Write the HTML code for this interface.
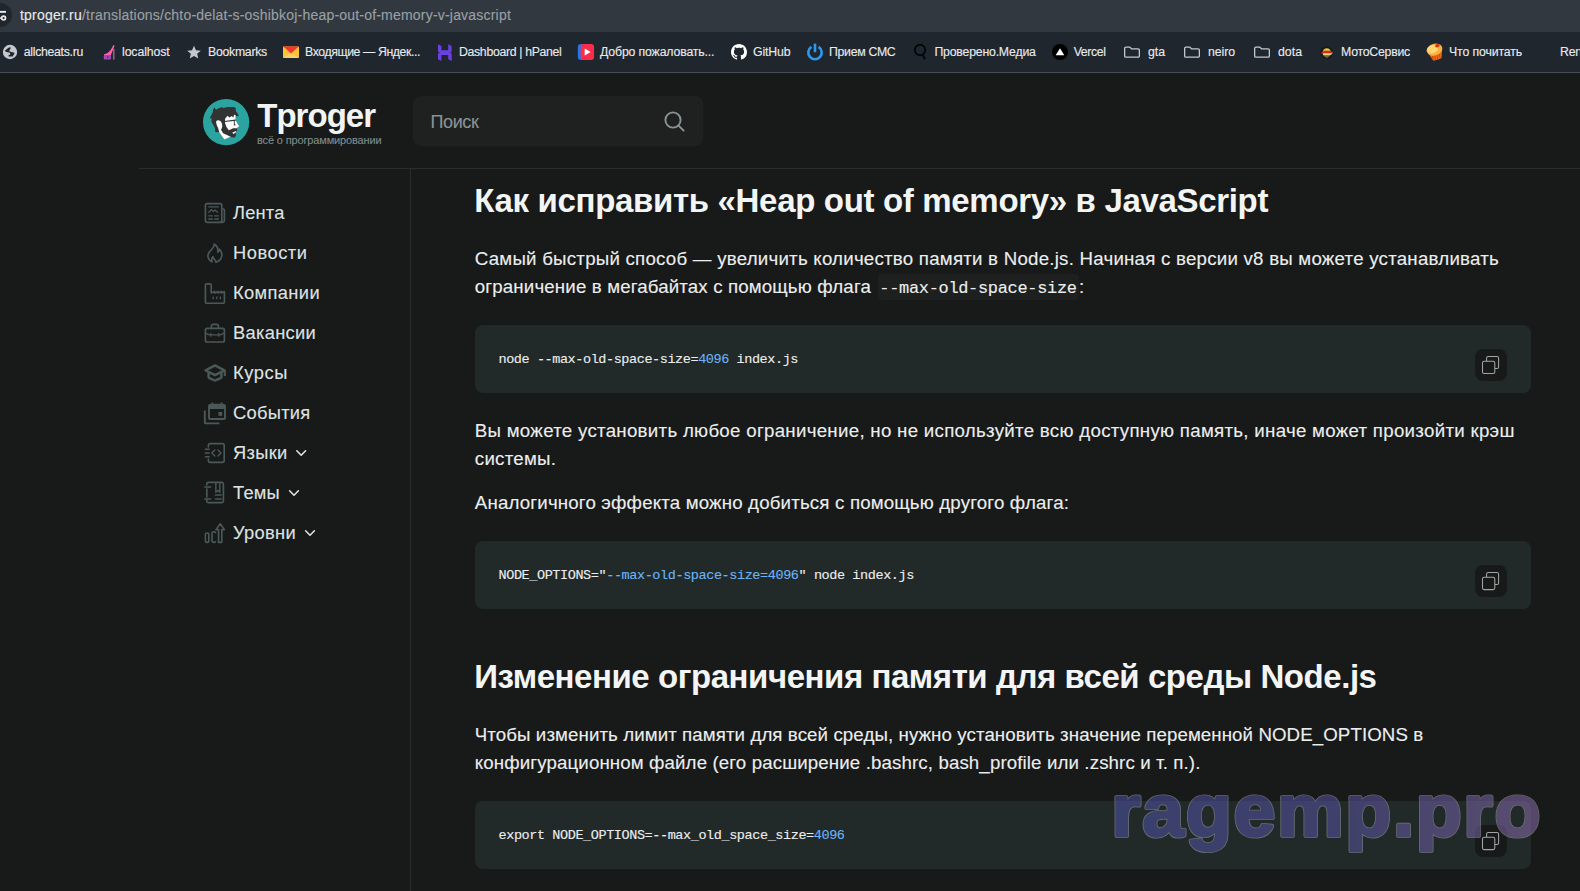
<!DOCTYPE html>
<html lang="ru"><head><meta charset="utf-8"><title>Что делать с ошибкой Heap out of memory в JavaScript</title>
<style>
html,body{margin:0;padding:0}
body{width:1580px;height:891px;overflow:hidden;background:#181a1a;position:relative;font-family:"Liberation Sans",sans-serif}
.t{position:absolute;white-space:nowrap;margin:0;-webkit-text-stroke:0.12px currentColor}
.a{position:absolute}
#addr{left:0;top:0;width:1580px;height:32px;background:#32383f}
#bmbar{left:0;top:32px;width:1580px;height:40px;background:#1f262d}
#bmline{left:0;top:72px;width:1580px;height:1px;background:#474c52}
#hline{left:139px;top:168px;width:1441px;height:1px;background:#2a2d2d}
#vline{left:410px;top:168px;width:1px;height:723px;background:#2a2d2d}
#searchbox{left:413px;top:96px;width:290px;height:50px;background:#1f2121;border-radius:8px}
.code{left:475px;width:1056px;height:68px;background:#222929;border-radius:8px}
.copy{left:1475px;width:32px;height:32px;background:#181a1a;border-radius:8px}
.inl{left:877.5px;top:274px;width:201.7px;height:25.7px;background:#1e2020;border-radius:4px}
.m{font-family:"Liberation Mono",monospace}

</style></head><body>
<div class="a" id="addr"></div>
<div class="a" id="bmbar"></div>
<div class="a" id="bmline"></div>
<!-- site info chip -->
<svg class="a" style="left:0;top:0" width="16" height="32" viewBox="0 0 16 32">
  <circle cx="0" cy="15" r="12" fill="#20262c"/>
  <rect x="-1" y="10.9" width="7" height="1.9" fill="#e8eaed"/>
  <rect x="-1" y="17.2" width="1.8" height="1.8" fill="#e8eaed"/>
  <circle cx="3.6" cy="18.1" r="1.9" fill="none" stroke="#e8eaed" stroke-width="1.7"/>
</svg>
<!-- bookmark favicons -->
<svg class="a" style="left:0;top:40px" width="1580" height="24" viewBox="0 40 1580 24">
  <!-- globe -->
  <circle cx="10" cy="52" r="7.2" fill="#c4c7cc"/>
  <path d="M5 50.5L8.8 47.4h2.3L9.9 49.4 9.2 51.3l2.3.7 3 .8-.4 1.5-1.5 2.3H8.8l-.6-.75 2.1-1.55-.4-1.5-4.2-1.15z" fill="#20262c"/>
  <!-- heel -->
  <path d="M104 54.2c3.2-.2 6.4-2.6 9.4-9.2l1.2.6c-1.2 4-3 7.600-3.900 9.800L104 55.800z" fill="#ff5fb0"/>
  <rect x="103.800" y="55" width="7.200" height="4.600" rx="0.800" fill="#a04bb5"/>
  <rect x="107" y="56.300" width="1.600" height="1.600" fill="#5d2b73"/>
  <rect x="112.900" y="49" width="1.700" height="10.600" fill="#8c5c82"/>
  <!-- star -->
  <path d="M194 45.700l1.950 4.500 4.850.450-3.650 3.200 1.100 4.750L194 56.100l-4.250 2.500 1.100-4.750-3.650-3.200 4.850-.450z" fill="#c4c7cc"/>
  <!-- yandex mail -->
  <rect x="283" y="46.400" width="16" height="11.500" rx="0.800" fill="#fcc23a"/>
  <path d="M283 57.900l8-5.500 8 5.500z" fill="#fdd264"/>
  <path d="M283.300 46.400h15.400L291 53.600z" fill="#f9352b"/>
  <!-- hpanel -->
  <path d="M438 44.300l3.400 1.700v4.200h6.800v-5.900l3.400 1.700v5.800h.1l-3.500 1.700h-6.800l-3.400-1.700zM438 59.300l0-5.800 3.400-1.700h6.800l3.500 1.700v7.500l-3.500-1.700v-4.200h-6.800v5.900z" fill="#6a40e0"/>
  <!-- red play -->
  <rect x="577.800" y="44" width="13" height="16" rx="3" fill="#1f78f0"/>
  <rect x="580.600" y="44" width="13.500" height="16" rx="3" fill="#f92d4b"/>
  <path d="M584.700 48.600l6 3.400-6 3.400z" fill="#fff"/>
  <!-- github -->
  <path transform="translate(731 44)" d="M8 0C3.58 0 0 3.58 0 8c0 3.54 2.29 6.53 5.47 7.59.4.07.55-.17.55-.38 0-.19-.01-.82-.01-1.49-2.01.37-2.53-.49-2.69-.94-.09-.23-.48-.94-.82-1.13-.28-.15-.68-.52-.01-.53.63-.01 1.08.58 1.23.82.72 1.21 1.87.87 2.33.66.07-.52.28-.87.51-1.07-1.78-.2-3.64-.89-3.64-3.95 0-.87.31-1.59.82-2.15-.08-.2-.36-1.02.08-2.12 0 0 .67-.21 2.2.82.64-.18 1.32-.27 2-.27s1.36.09 2 .27c1.53-1.04 2.2-.82 2.2-.82.44 1.1.16 1.92.08 2.12.51.56.82 1.27.82 2.15 0 3.07-1.87 3.75-3.65 3.95.29.25.54.73.54 1.48 0 1.07-.01 1.93-.01 2.2 0 .21.15.46.55.38A8.01 8.01 0 0016 8c0-4.42-3.58-8-8-8z" fill="#fff"/>
  <!-- power -->
  <path d="M811.400 46.900a6.700 6.700 0 1 0 7.200 0" fill="none" stroke="#2d98ec" stroke-width="2.600" stroke-linecap="butt"/>
  <rect x="813.700" y="43.600" width="2.600" height="8.600" fill="#2d98ec"/>
  <!-- Q magnifier (black) -->
  <circle cx="920" cy="50" r="5.200" fill="none" stroke="#050607" stroke-width="1.900"/>
  <path d="M922.600 54.600l2.400 4.600" stroke="#050607" stroke-width="2" fill="none"/>
  <path d="M920.300 46.700a3.300 3.300 0 0 1 2.700 2" stroke="#2a3036" stroke-width="0.900" fill="none"/>
  <!-- vercel -->
  <circle cx="1060" cy="52" r="8" fill="#000"/>
  <path d="M1060 48.200l4.300 7h-8.600z" fill="#fff"/>
  <!-- folders -->
  <g fill="none" stroke="#c4c7cc" stroke-width="1.300" stroke-linejoin="round">
    <path d="M1124.650 48.300a1.200 1.200 0 0 1 1.200-1.200h4l1.600 1.700h6.700a1.200 1.200 0 0 1 1.200 1.200v6a1.200 1.200 0 0 1-1.200 1.200h-12.300a1.200 1.200 0 0 1-1.200-1.200z"/>
    <path d="M1184.650 48.300a1.200 1.200 0 0 1 1.200-1.200h4l1.600 1.700h6.700a1.200 1.200 0 0 1 1.200 1.200v6a1.200 1.200 0 0 1-1.200 1.200h-12.300a1.200 1.200 0 0 1-1.200-1.200z"/>
    <path d="M1254.650 48.300a1.200 1.200 0 0 1 1.200-1.200h4l1.600 1.700h6.700a1.200 1.200 0 0 1 1.200 1.200v6a1.200 1.200 0 0 1-1.200 1.200h-12.300a1.200 1.200 0 0 1-1.200-1.200z"/>
  </g>
  <!-- moto -->
  <circle cx="1326.800" cy="52.800" r="6.400" fill="#17191b"/>
  <ellipse cx="1326.800" cy="52.800" rx="4.200" ry="4.600" fill="#e8c81e"/>
  <path d="M1320.300 53.300l4-2.500h5.500l3.500 1.200-3 1.600h-6z" fill="#d8262c"/>
  <path d="M1323 53.600h8l2-1-1.500 1.900h-7z" fill="#e9e9e9"/>
  <rect x="1323.500" y="55.500" width="6.500" height="1.100" fill="#2a2a2a"/>
  <!-- cupcake -->
  <g transform="rotate(-16 1435 52)">
    <path d="M1428.600 52.500h13.400l-1.900 6.200q-.4 1.300-1.700 1.300h-6.200q-1.300 0-1.700-1.300z" fill="#ea6a14"/>
    <path d="M1431.200 54v5.600M1433.600 54v6M1436 54v6M1438.400 54v5.600" stroke="#c9480a" stroke-width="0.800" fill="none"/>
    <ellipse cx="1435.200" cy="49.600" rx="8" ry="5.900" fill="#fbb040"/>
    <ellipse cx="1433.400" cy="48.600" rx="5.600" ry="4" fill="#ffd671"/>
    <ellipse cx="1439" cy="46.600" rx="2.300" ry="1.700" fill="#d23a10"/>
  </g>
</svg>
<div class="a" id="hline"></div>
<div class="a" id="vline"></div>
<!-- logo -->
<svg class="a" style="left:198px;top:94px" width="56" height="56" viewBox="0 0 891 891">
  <circle cx="447" cy="447" r="368" fill="#2ba3a0"/>
  <path d="M185 385L215 330 235 290 240 245 265 215 285 250 330 225 385 205 400 222 470 205H560L600 220 602 270 650 340 618 358 598 348 600 420 655 515 615 545 625 580 600 620 605 670 570 695 520 680 420 725 330 610 275 605 270 540 215 440 215 385z" fill="#333"/>
  <path d="M430 395L470 345 500 372 540 350 560 378 575 330 598 335 600 420 655 515 615 545 560 545 490 575 450 520 430 460z" fill="#fff"/>
  <path d="M290 430C320 405 365 425 380 470 392 510 385 550 365 565L400 625 520 680 420 725 340 615 320 540C300 510 285 465 290 430z" fill="#fff"/>
  <path d="M420 430L600 405 602 425 425 445z" fill="#333"/>
  <path d="M570 410h12l4 80 16-5 2 10-34 10z" fill="#333"/>
  <path d="M545 615L612 585 600 612 565 636z" fill="#fff"/>
</svg>
<div class="a" id="searchbox"></div>
<svg class="a" style="left:660px;top:108px" width="28" height="28" viewBox="660 108 28 28">
  <circle cx="673" cy="120" r="7.600" fill="none" stroke="#8a9494" stroke-width="1.900"/>
  <path d="M678.600 125.600L683.600 130.600" stroke="#8a9494" stroke-width="1.900" stroke-linecap="round"/>
</svg>
<!-- nav icons -->
<svg class="a" style="left:200px;top:196px" width="124" height="352" viewBox="200 196 124 352" fill="none" stroke="#4b5858" stroke-width="1.650" stroke-linejoin="round" stroke-linecap="round">
  <!-- newspaper -->
  <rect x="205.400" y="203.600" width="16.400" height="18.700" rx="1.800"/>
  <path d="M221.800 209h1.400a1.200 1.200 0 0 1 1.200 1.200v10.300a1.800 1.800 0 0 1-1.800 1.800h-2"/>
  <path d="M208.800 206.800h9.600M208.800 212.300l2.600-2.600 2 1.800 1.600-1.600 2.600 2.400M208.800 215.800h3.600M214.600 215.800h3.800M208.800 219h3.600M214.600 219h3.800" stroke-width="1.300"/>
  <!-- flame -->
  <path d="M214.200 244c.6 3.600-3.400 5.600-5.400 9-1.800 3.200-.6 7 3.200 8.800-.6-1.800-.4-3.600 1-5.200.2 1.600 1 2.600 1.800 3.200.8.600 1.200 1.400 1 2.400 4-1 7-4.600 5.800-9.200-.4-1.600-1.200-2.800-2-3.800-.2 1.400-.8 2.400-1.800 3 .6-3.400-1-6.400-3.600-8.200z"/>
  <!-- factory -->
  <path d="M205.400 302.200v-17.400a1 1 0 0 1 1-1h3.800a1 1 0 0 1 1 1v8.200l3.400-1.600v1.600l3.400-1.600v1.600l3.400-1.600v1.600l3-1.400v10.600a1 1 0 0 1-1 1h-17a1 1 0 0 1-1-1z"/>
  <path d="M213.200 296.400v2.800M216.800 296.400v2.800M220.400 296.400v2.800" stroke-width="1.300" stroke-linecap="butt"/>
  <!-- briefcase -->
  <rect x="205.400" y="328.400" width="19" height="13.600" rx="1.800"/>
  <path d="M211.400 328.400v-2.200a1.800 1.800 0 0 1 1.800-1.800h3.400a1.800 1.800 0 0 1 1.800 1.800v2.200"/>
  <path d="M205.600 333.200l3.800 1.600h11l3.800-1.600M210.800 333.400v2.800M218.800 333.400v2.800" stroke-width="1.300"/>
  <!-- school -->
  <g stroke-width="2.500">
    <path d="M205.600 370.300L215 365.400l9.400 4.900L215 375.200z"/>
    <path d="M208.600 373.800v3.200q0 .8.800 1.200l4.600 2q1 .4 2 0l4.600-2q.8-.4.800-1.200v-3.200"/>
    <path d="M224.800 371v4.200" stroke-width="2.200"/>
  </g>
  <!-- events -->
  <path d="M204.800 410.600v11.800a1 1 0 0 0 1 1h13.600" stroke-width="1.900" stroke-linecap="butt"/>
  <rect x="209" y="404.600" width="16" height="14.400" rx="1.600" stroke-width="1.900"/>
  <rect x="209" y="404.600" width="16" height="4.400" fill="#4b5858" stroke="none"/>
  <path d="M212.400 402.400v2.600M221.600 402.400v2.600" stroke-width="1.700" stroke-linecap="butt"/>
  <rect x="218.400" y="412" width="3.800" height="3.800" fill="#4b5858" stroke="none"/>
  <!-- code notebook -->
  <path d="M208.400 447v-1.600a1.800 1.800 0 0 1 1.800-1.800h12.200a1.800 1.800 0 0 1 1.800 1.800v15.200a1.800 1.800 0 0 1-1.800 1.800h-12.200a1.800 1.800 0 0 1-1.800-1.800v-1.600"/>
  <path d="M205.400 449.200h3.800M205.400 453h3.800M205.400 456.800h3.800M214.800 450l-3 3 3 3M218 450l3 3-3 3" stroke-width="1.400"/>
  <!-- book -->
  <path d="M206.800 485v-1a1.600 1.600 0 0 1 1.600-1.600h13.400a1.600 1.600 0 0 1 1.600 1.600v17a1.600 1.600 0 0 1-1.600 1.600h-13.400a1.600 1.600 0 0 1-1.600-1.600v-1M206.800 489v8"/>
  <path d="M204.800 487h6M204.800 499h6M215.800 482.800v9.400l2-1.800 2 1.800v-9.400M215.400 495h5.800M215.400 499h5.800" stroke-width="1.400"/>
  <!-- levels -->
  <rect x="205.400" y="533" width="3.400" height="9.400" rx="1.500" stroke-width="1.600"/>
  <path d="M215.600 532.600a1.600 1.600 0 0 0-1.400-.8h-.6a1.600 1.600 0 0 0-1.600 1.600v7.400a1.600 1.600 0 0 0 1.600 1.600h.6a1.600 1.600 0 0 0 1.400-.8" stroke-width="1.600"/>
  <path d="M218.600 542.400v-12.800h-2.600l4.200-5.800 4.200 5.800h-2.600v12.800z" stroke-width="1.600"/>
  <!-- chevrons -->
  <g stroke="#dfe2e2" stroke-width="1.600">
    <path d="M296.800 450.800l4.400 4.400 4.400-4.400"/>
    <path d="M289.600 490.800l4.400 4.400 4.400-4.400"/>
    <path d="M305.600 530.800l4.400 4.400 4.400-4.400"/>
  </g>
</svg>
<!-- main blocks -->
<div class="a inl"></div>
<div class="a code" style="top:325px"></div>
<div class="a code" style="top:541px"></div>
<div class="a code" style="top:801px"></div>
<div class="a copy" style="top:349px"></div>
<div class="a copy" style="top:565px"></div>
<div class="a copy" style="top:825px"></div>
<svg class="a" style="left:1475px;top:349px" width="32" height="508" viewBox="1475 349 32 508" fill="#181a1a" stroke="#9fa6a6" stroke-width="1.050">
  <rect x="1486.600" y="356.5" width="12" height="12" rx="1.600"/><rect x="1482.500" y="361.3" width="12.300" height="12.300" rx="1.600"/>
  <rect x="1486.600" y="572.5" width="12" height="12" rx="1.600"/><rect x="1482.500" y="577.3" width="12.300" height="12.300" rx="1.600"/>
  <rect x="1486.600" y="832.5" width="12" height="12" rx="1.600"/><rect x="1482.500" y="837.3" width="12.300" height="12.300" rx="1.600"/>
</svg>
<!-- watermark -->
<svg class="a" style="left:1100px;top:770px" width="480" height="121" viewBox="1100 770 480 121" font-family="'Liberation Sans',sans-serif" font-weight="700" font-size="74.5">
  <defs>
    <linearGradient id="wg" gradientUnits="userSpaceOnUse" x1="1116" y1="0" x2="1540" y2="0">
      <stop offset="0" stop-color="#5157b0"/><stop offset="0.55" stop-color="#5e58ad"/><stop offset="1" stop-color="#9674b8"/>
    </linearGradient>
    <mask id="wm" maskUnits="userSpaceOnUse" x="1100" y="770" width="480" height="121">
      <rect x="1100" y="770" width="480" height="121" fill="#fff"/>
      <text x="1111.400" y="835.700" textLength="428.800" lengthAdjust="spacing" fill="#000" stroke="#000" stroke-width="2.400" stroke-linejoin="round">ragemp.pro</text>
    </mask>
  </defs>
  <text x="1111.400" y="835.700" textLength="428.800" lengthAdjust="spacing" fill="url(#wg)" stroke="url(#wg)" stroke-width="2.400" stroke-linejoin="round" opacity="0.5">ragemp.pro</text>
  <text x="1111.400" y="835.700" textLength="428.800" lengthAdjust="spacing" fill="none" stroke="#a9adb8" stroke-opacity="0.5" stroke-width="4.200" stroke-linejoin="round" mask="url(#wm)">ragemp.pro</text>
</svg>

<div class="t" id="url" style="left:20px;top:7.00px;font-size:14px;line-height:16px;color:#9aa0a6;letter-spacing:0.202px;"><span style="color:#e8eaed">tproger.ru</span>/translations/chto-delat-s-oshibkoj-heap-out-of-memory-v-javascript</div>
<div class="t" id="bm0" style="left:23.8px;top:45.00px;font-size:12.3px;line-height:14px;color:#e8eaed;letter-spacing:-0.308px;">allcheats.ru</div>
<div class="t" id="bm1" style="left:122px;top:45.00px;font-size:12.3px;line-height:14px;color:#e8eaed;letter-spacing:-0.105px;">localhost</div>
<div class="t" id="bm2" style="left:208px;top:45.00px;font-size:12.3px;line-height:14px;color:#e8eaed;letter-spacing:-0.280px;">Bookmarks</div>
<div class="t" id="bm3" style="left:305px;top:45.00px;font-size:12.3px;line-height:14px;color:#e8eaed;letter-spacing:-0.408px;">Входящие — Яндек...</div>
<div class="t" id="bm4" style="left:459px;top:45.00px;font-size:12.3px;line-height:14px;color:#e8eaed;letter-spacing:-0.332px;">Dashboard | hPanel</div>
<div class="t" id="bm5" style="left:600px;top:45.00px;font-size:12.3px;line-height:14px;color:#e8eaed;letter-spacing:-0.152px;">Добро пожаловать...</div>
<div class="t" id="bm6" style="left:753px;top:45.00px;font-size:12.3px;line-height:14px;color:#e8eaed;letter-spacing:-0.147px;">GitHub</div>
<div class="t" id="bm7" style="left:829px;top:45.00px;font-size:12.3px;line-height:14px;color:#e8eaed;letter-spacing:-0.303px;">Прием СМС</div>
<div class="t" id="bm8" style="left:934.4px;top:45.00px;font-size:12.3px;line-height:14px;color:#e8eaed;letter-spacing:-0.201px;">Проверено.Медиа</div>
<div class="t" id="bm9" style="left:1073.7px;top:45.00px;font-size:12.3px;line-height:14px;color:#e8eaed;letter-spacing:-0.381px;">Vercel</div>
<div class="t" id="bm10" style="left:1148px;top:45.00px;font-size:12.3px;line-height:14px;color:#e8eaed;letter-spacing:-0.036px;">gta</div>
<div class="t" id="bm11" style="left:1208px;top:45.00px;font-size:12.3px;line-height:14px;color:#e8eaed;letter-spacing:-0.072px;">neiro</div>
<div class="t" id="bm12" style="left:1278px;top:45.00px;font-size:12.3px;line-height:14px;color:#e8eaed;letter-spacing:0.016px;">dota</div>
<div class="t" id="bm13" style="left:1341px;top:45.00px;font-size:12.3px;line-height:14px;color:#e8eaed;letter-spacing:-0.241px;">МотоСервис</div>
<div class="t" id="bm14" style="left:1449px;top:45.00px;font-size:12.3px;line-height:14px;color:#e8eaed;letter-spacing:-0.130px;">Что почитать</div>
<div class="t" id="bm15" style="left:1560px;top:45.00px;font-size:12.3px;line-height:14px;color:#e8eaed;letter-spacing:-0.188px;">Ren</div>
<div class="t" id="logo" style="left:257.3px;top:97.00px;font-size:33px;line-height:37px;color:#f2f4f4;font-weight:700;-webkit-text-stroke:0;letter-spacing:-0.996px;">Tproger</div>
<div class="t" id="sub" style="left:257px;top:134.00px;font-size:11px;line-height:12px;color:#7f8c8c;letter-spacing:-0.146px;">всё о программировании</div>
<div class="t" id="search" style="left:430.5px;top:112.00px;font-size:18px;line-height:20px;color:#8a9494;letter-spacing:-0.378px;">Поиск</div>
<div class="t" id="nav0" style="left:233px;top:202.00px;font-size:18.3px;line-height:21px;color:#dfe2e2;letter-spacing:0.178px;">Лента</div>
<div class="t" id="nav1" style="left:233px;top:242.00px;font-size:18.3px;line-height:21px;color:#dfe2e2;letter-spacing:0.531px;">Новости</div>
<div class="t" id="nav2" style="left:233px;top:282.00px;font-size:18.3px;line-height:21px;color:#dfe2e2;letter-spacing:0.377px;">Компании</div>
<div class="t" id="nav3" style="left:233px;top:322.00px;font-size:18.3px;line-height:21px;color:#dfe2e2;letter-spacing:0.301px;">Вакансии</div>
<div class="t" id="nav4" style="left:233px;top:362.00px;font-size:18.3px;line-height:21px;color:#dfe2e2;letter-spacing:0.591px;">Курсы</div>
<div class="t" id="nav5" style="left:233px;top:402.00px;font-size:18.3px;line-height:21px;color:#dfe2e2;letter-spacing:0.290px;">События</div>
<div class="t" id="nav6" style="left:233px;top:442.00px;font-size:18.3px;line-height:21px;color:#dfe2e2;letter-spacing:0.312px;">Языки</div>
<div class="t" id="nav7" style="left:233px;top:482.00px;font-size:18.3px;line-height:21px;color:#dfe2e2;letter-spacing:0.246px;">Темы</div>
<div class="t" id="nav8" style="left:233px;top:522.00px;font-size:18.3px;line-height:21px;color:#dfe2e2;letter-spacing:0.307px;">Уровни</div>
<div class="t" id="h1" style="left:474.3px;top:182.00px;font-size:33px;line-height:37px;color:#f3f5f5;font-weight:700;-webkit-text-stroke:0;letter-spacing:-0.327px;">Как исправить «Heap out of memory» в JavaScript</div>
<div class="t" id="p1a" style="left:474.8px;top:248.00px;font-size:18.7px;line-height:21px;color:#eceeee;letter-spacing:0.229px;">Самый быстрый способ — увеличить количество памяти в Node.js. Начиная с версии v8 вы можете устанавливать</div>
<div class="t" id="p1b" style="left:474.8px;top:276.00px;font-size:18.7px;line-height:21px;color:#eceeee;letter-spacing:0.144px;">ограничение в мегабайтах с помощью флага</div>
<div class="t m" id="p1c" style="left:879.3px;top:279.00px;font-size:17px;line-height:19px;color:#eceeee;letter-spacing:-0.332px;">--max-old-space-size</div>
<div class="t" id="p1d" style="left:1079px;top:276.00px;font-size:18.7px;line-height:21px;color:#eceeee;">:</div>
<div class="t" id="p2a" style="left:474.8px;top:420.00px;font-size:18.7px;line-height:21px;color:#eceeee;letter-spacing:0.285px;">Вы можете установить любое ограничение, но не используйте всю доступную память, иначе может произойти крэш</div>
<div class="t" id="p2b" style="left:474.8px;top:448.00px;font-size:18.7px;line-height:21px;color:#eceeee;letter-spacing:0.257px;">системы.</div>
<div class="t" id="p3" style="left:474.8px;top:492.00px;font-size:18.7px;line-height:21px;color:#eceeee;letter-spacing:0.167px;">Аналогичного эффекта можно добиться с помощью другого флага:</div>
<div class="t" id="h2" style="left:474.3px;top:658.00px;font-size:33px;line-height:37px;color:#f3f5f5;font-weight:700;-webkit-text-stroke:0;letter-spacing:-0.442px;">Изменение ограничения памяти для всей среды Node.js</div>
<div class="t" id="p4a" style="left:474.8px;top:724.00px;font-size:18.7px;line-height:21px;color:#eceeee;letter-spacing:0.090px;">Чтобы изменить лимит памяти для всей среды, нужно установить значение переменной NODE_OPTIONS в</div>
<div class="t" id="p4b" style="left:474.8px;top:752.00px;font-size:18.7px;line-height:21px;color:#eceeee;letter-spacing:0.118px;">конфигурационном файле (его расширение .bashrc, bash_profile или .zshrc и т. п.).</div>
<div class="t m" id="c1" style="left:498.5px;top:352.00px;font-size:13.5px;line-height:15px;color:#eceeee;letter-spacing:-0.422px;">node --max-old-space-size=<span style="color:#6ab4f5">4096</span> index.js</div>
<div class="t m" id="c2" style="left:498.5px;top:568.00px;font-size:13.5px;line-height:15px;color:#eceeee;letter-spacing:-0.409px;">NODE_OPTIONS="<span style="color:#6ab4f5">--max-old-space-size=4096</span>" node index.js</div>
<div class="t m" id="c3" style="left:498.5px;top:828.00px;font-size:13.5px;line-height:15px;color:#eceeee;letter-spacing:-0.412px;">export NODE_OPTIONS=--max_old_space_size=<span style="color:#6ab4f5">4096</span></div>
</body></html>
